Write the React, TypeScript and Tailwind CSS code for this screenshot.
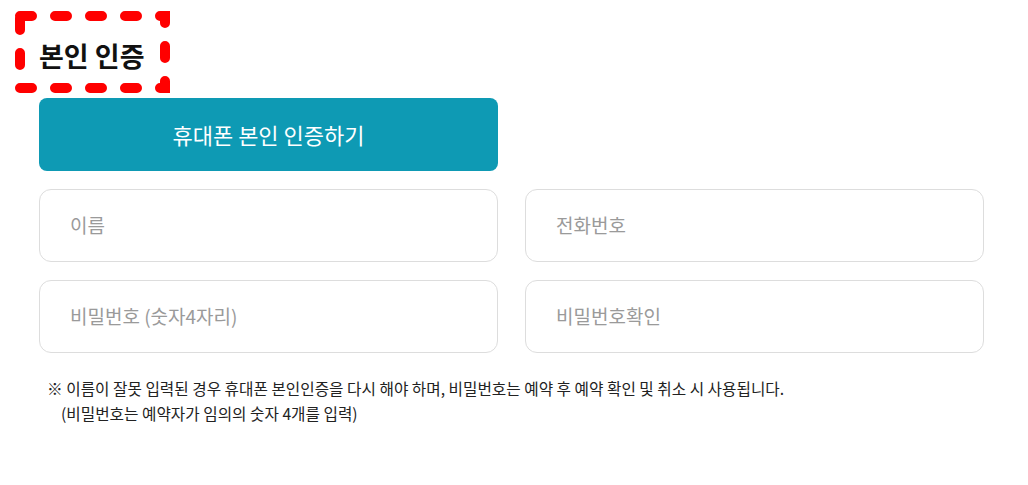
import React from "react";

const font = { fontFamily: '"Noto Sans CJK KR", "Noto Sans", sans-serif' };

function Field({ placeholder }: { placeholder: string }) {
  return (
    <div className="h-[73px] rounded-[12px] border border-[#dddddd] bg-white flex items-center pl-[30px]">
      <span className="text-[19px] text-[#9a9a9a]">{placeholder}</span>
    </div>
  );
}

export default function App() {
  return (
    <div className="relative w-[1028px] h-[485px] bg-white" style={font}>
      <div className="pl-[39px] w-[984px]">
        <h2 className="pt-[39px] h-[98px] text-[27px] leading-[34px] font-bold text-[#111]">
          본인 인증
        </h2>
        <button className="w-[459px] h-[73px] rounded-[8px] bg-[#0e9ab4] text-white text-[22px] flex items-center justify-center">
          휴대폰 본인 인증하기
        </button>
        <div className="grid grid-cols-2 gap-x-[27px] gap-y-[18px] mt-[18px]">
          <Field placeholder="이름" />
          <Field placeholder="전화번호" />
          <Field placeholder="비밀번호 (숫자4자리)" />
          <Field placeholder="비밀번호확인" />
        </div>
        <div className="mt-[23px] pl-[8px] text-[15.7px] leading-[25px] text-[#222]">
          <p>※ 이름이 잘못 입력된 경우 휴대폰 본인인증을 다시 해야 하며, 비밀번호는 예약 후 예약 확인 및 취소 시 사용됩니다.</p>
          <p className="pl-[14px]">(비밀번호는 예약자가 임의의 숫자 4개를 입력)</p>
        </div>
      </div>
      <svg className="absolute left-0 top-0 pointer-events-none" width="200" height="110">
        <rect
          x="20"
          y="16"
          width="145"
          height="72"
          fill="none"
          stroke="#ff0000"
          strokeWidth="10"
          strokeLinecap="round"
          strokeDasharray="12 23"
        />
      </svg>
    </div>
  );
}
